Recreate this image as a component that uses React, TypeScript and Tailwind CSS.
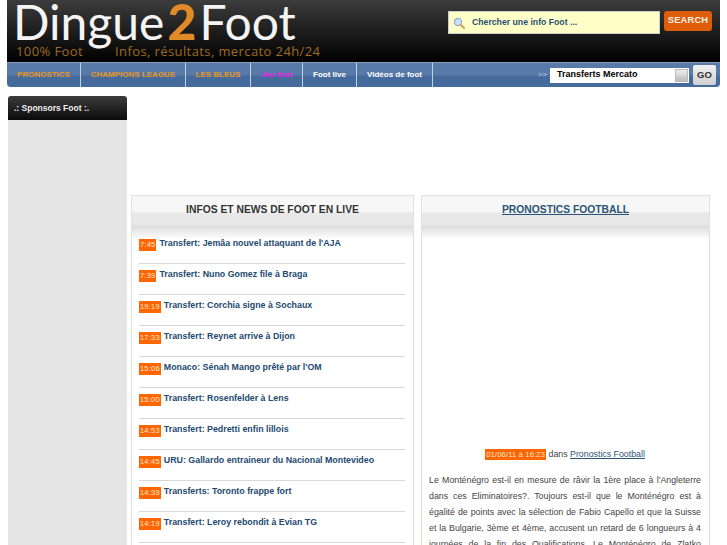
const news = [
  { time: "7:45", title: "Transfert: Jemâa nouvel attaquant de l'AJA" },
  { time: "7:39", title: "Transfert: Nuno Gomez file à Braga" },
  { time: "19:19", title: "Transfert: Corchia signe à Sochaux" },
  { time: "17:33", title: "Transfert: Reynet arrive à Dijon" },
  { time: "15:06", title: "Monaco: Sénah Mango prêté par l'OM" },
  { time: "15:00", title: "Transfert: Rosenfelder à Lens" },
  { time: "14:53", title: "Transfert: Pedretti enfin lillois" },
  { time: "14:45", title: "URU: Gallardo entraineur du Nacional Montevideo" },
  { time: "14:39", title: "Transferts: Toronto frappe fort" },
  { time: "14:19", title: "Transfert: Leroy rebondit à Evian TG" },
];

const navItems = [
  { label: "PRONOSTICS", color: "text-[#e8961e]", width: "w-[74px]" },
  { label: "CHAMPIONS LEAGUE", color: "text-[#e8961e]", width: "w-[105px]" },
  { label: "LES BLEUS", color: "text-[#e8961e]", width: "w-[65px]" },
  { label: "Jeu foot", color: "text-[#e820e8]", width: "w-[52px]" },
  { label: "Foot live", color: "text-white", width: "w-[54px]" },
  { label: "Vidéos de foot", color: "text-white", width: "w-[76px]" },
];

function PanelHead({ children }: { children: React.ReactNode }) {
  return (
    <div className="h-[43px] bg-[linear-gradient(#f7f7f7_0px,#f7f7f7_16px,#e8e8e8_17px,#e8e8e8_29px,#dcdcdc_30px,#ffffff_43px)] pt-[7px] text-center text-[10.3px] leading-[14px] font-bold">
      {children}
    </div>
  );
}

export default function App() {
  return (
    <div className="h-[545px] w-[727px] overflow-hidden bg-white font-['Liberation_Sans',Arial,sans-serif]">
      {/* header */}
      <div className="ml-[7px] w-[713px]">
        <div className="flex h-[62px] justify-between bg-[linear-gradient(#3c3c3c,#000000)]">
          <div className="pl-[6px]">
            <div className="font-['Lato',sans-serif] text-[48px] leading-[42px] font-normal whitespace-nowrap text-[#f4f4f4]">
              Dingue
              <span className="mx-[3px] text-[50px] font-black text-[#e08a28]">2</span>
              Foot
            </div>
            <div className="pl-[3px] font-['Open_Sans',sans-serif] text-[13px] leading-[16px] tracking-[0.4px] text-[#a06a20]">
              100% Foot<span className="ml-[32px]">Infos, résultats, mercato 24h/24</span>
            </div>
          </div>
          <div className="flex pt-[11px] pr-[8px]">
            <div className="flex h-[23px] w-[212px] items-center border border-[#cccccc] bg-[#ffffc8] pl-[4px] text-[8.7px] font-bold text-[#2a4f74]">
              <svg viewBox="0 0 12 12" className="mr-[7px] h-[12px] w-[12px]">
                <circle cx="5" cy="5" r="3.6" fill="#cfe0f5" stroke="#8fb0d8" strokeWidth="1.2" />
                <path d="M7.8 7.8L11 11" stroke="#d0a060" strokeWidth="2" strokeLinecap="round" />
              </svg>
              Chercher une info Foot ...
            </div>
            <div className="ml-[4px] flex h-[20px] w-[48px] items-center justify-center rounded-[3px] bg-[#dd5d0a] text-[9.3px] font-bold tracking-[0.2px] text-[#fff2e6]">
              SEARCH
            </div>
          </div>
        </div>

        {/* nav */}
        <div className="flex h-[25px] items-stretch rounded-b-[4px] border-t border-[#8d9db8] bg-[linear-gradient(#587aa8_0px,#587aa8_12px,#456a9c_13px,#456a9c_100%)]">
          {navItems.map((item) => (
            <div
              key={item.label}
              className={`flex items-center justify-center border-r border-[#c4d0e0] pb-[1px] text-[8px] font-bold ${item.color} ${item.width}`}
            >
              {item.label}
            </div>
          ))}
          <div className="flex flex-1 items-center justify-end pr-[4px]">
            <span className="mr-[3px] text-[8px] text-[#c4d0e0]">&gt;&gt;</span>
            <div className="flex h-[15px] w-[139px] items-center justify-between bg-white pl-[7px] text-[9px] font-bold text-black">
              Transferts Mercato
              <span className="mr-[1px] flex h-[13px] w-[13px] items-center justify-center border border-[#bbbbbb] bg-[linear-gradient(#eeeeee,#bbbbbb)]">
                <span className="h-0 w-0 border-x-[3px] border-t-[4px] border-x-transparent border-t-[#dddddd]" />
              </span>
            </div>
            <div className="ml-[4px] flex h-[20px] w-[23px] items-center justify-center rounded-[2px] bg-[linear-gradient(#f2f2f2,#cfcfcf)] text-[9.5px] font-bold text-[#333333]">
              GO
            </div>
          </div>
        </div>
      </div>

      {/* body */}
      <div className="mt-[9px] ml-[8px] flex">
        <div className="w-[119px]">
          <div className="flex h-[24px] items-center rounded-t-[3px] bg-[linear-gradient(#3c3c3c,#0a0a0a)] pl-[6px] text-[8.5px] font-bold text-[#eeeeee]">
            .: Sponsors Foot :.
          </div>
          <div className="h-[430px] bg-[#e4e4e4]" />
        </div>

        <div className="ml-[4px] flex pt-[99px]">
          <div className="w-[283px] border border-[#e0e0e0] text-[#333333]">
            <PanelHead>INFOS ET NEWS DE FOOT EN LIVE</PanelHead>
            <div className="pr-[8px] pl-[7px]">
              {news.map((n) => (
                <div key={n.title} className="mb-[6px] h-[25px] border-b border-[#d8d8d8] text-[8.85px] leading-[11px] font-bold text-[#234a70]">
                  <div className="flex h-[11px] items-start">
                    <span className="mr-[3px] bg-[#ff6600] px-[1px] text-[7.5px] leading-[12px] font-normal tracking-[0.2px] text-[#ffe8d8]">
                      {n.time}
                    </span>
                    <span className="-mt-[1px]">{n.title}</span>
                  </div>
                </div>
              ))}
            </div>
          </div>

          <div className="ml-[7px] w-[289px] border border-[#e0e0e0]">
            <PanelHead>
              <span className="text-[#2a5478] underline">PRONOSTICS FOOTBALL</span>
            </PanelHead>
            <div className="pt-[210px] pr-[8px] pl-[7px]">
              <div className="text-center text-[8.8px] leading-[11px] text-[#444444]">
                <span className="bg-[#ff6600] px-[1px] py-[1px] text-[7.5px] tracking-[0.2px] text-[#ffe8d8]">01/06/11 à 16:23</span> dans{" "}
                <span className="text-[#2a5478] underline">Pronostics Football</span>
              </div>
              <p className="mt-[12px] text-justify text-[8.8px] leading-[16px] text-[#444444]">
                Le Monténégro est-il en mesure de râvir la 1ère place à l'Angleterre dans ces Eliminatoires?. Toujours est-il que le Monténégro est à égalité de points avec la sélection de Fabio Capello et que la Suisse et la Bulgarie, 3ème et 4ème, accusent un retard de 6 longueurs à 4 journées de la fin des Qualifications. Le Monténégro de Zlatko Kranjcar reste sur une belle série
              </p>
            </div>
          </div>
        </div>
      </div>
    </div>
  );
}
